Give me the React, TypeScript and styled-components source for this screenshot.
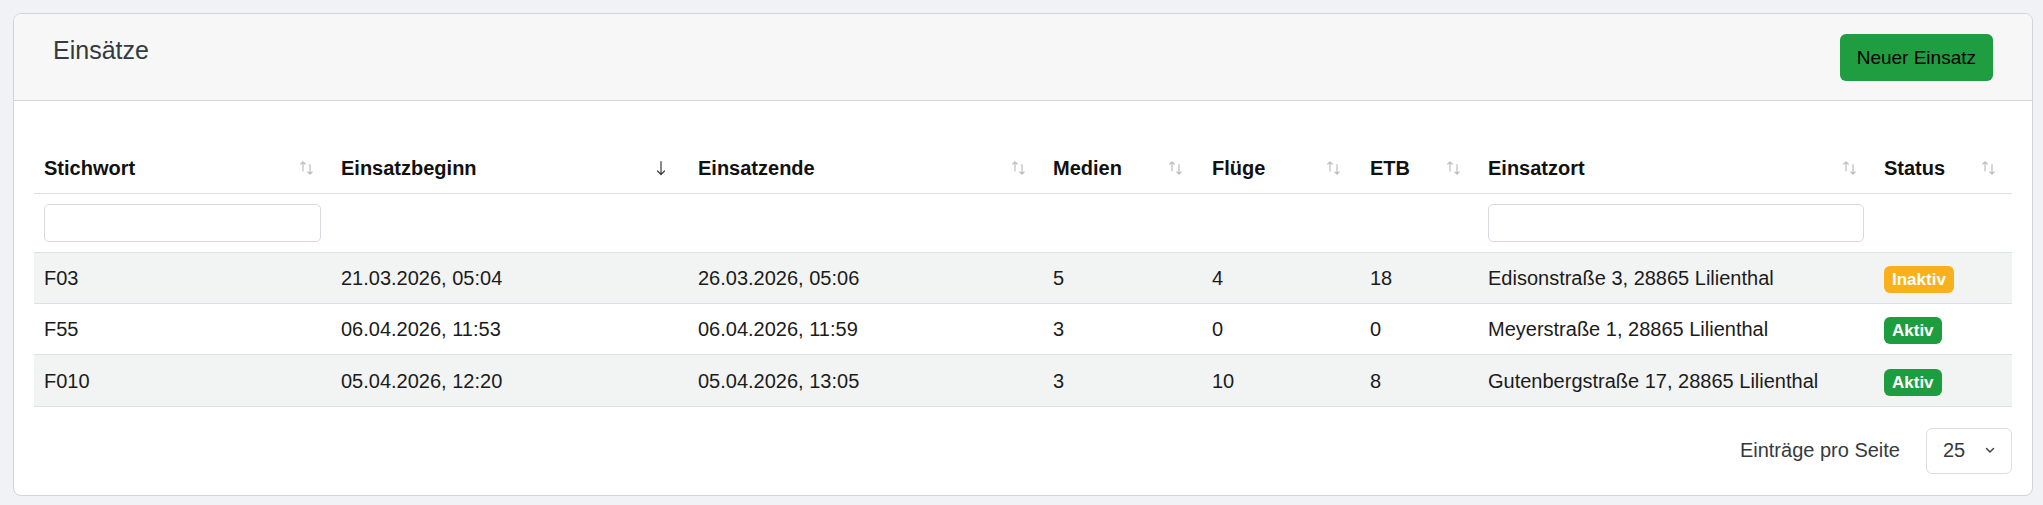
import React from "react";
import styled, { createGlobalStyle } from "styled-components";

const GlobalStyle = createGlobalStyle`
  html, body {
    margin: 0;
    padding: 0;
    background: #f1f2f5;
    font-family: "Liberation Sans", Arial, sans-serif;
    color: #212529;
  }
  * { box-sizing: border-box; }
`;

const Page = styled.div`
  padding: 13px 10px 13px 13px;
`;

const Card = styled.section`
  background: #ffffff;
  border: 1px solid #d3d4d8;
  border-radius: 8px;
  overflow: hidden;
`;

const CardHeader = styled.header`
  display: flex;
  justify-content: space-between;
  align-items: flex-start;
  padding: 20px 39px 19px 39px;
  background: #f7f7f7;
  border-bottom: 1px solid #d3d4d8;
`;

const Title = styled.h2`
  margin: 2px 0 0;
  font-size: 25px;
  line-height: 29px;
  font-weight: 400;
  color: #343a40;
`;

const PrimaryButton = styled.button`
  height: 47px;
  padding: 0 17px;
  border: none;
  border-radius: 6px;
  background: #1f9d40;
  color: #000;
  font-family: inherit;
  font-size: 19px;
  cursor: pointer;
`;

const CardBody = styled.div`
  padding: 42px 20px 21px;
`;

const Table = styled.table`
  width: 100%;
  table-layout: fixed;
  border-collapse: collapse;
  font-size: 20px;
`;

const HeadCell = styled.th<{ $trail?: number }>`
  padding: 10px ${(p) => p.$trail ?? 16}px 10px 10px;
  text-align: left;
  font-weight: 700;
  color: #111;
  line-height: 30px;
  border-bottom: 1px solid #dfe0e6;
`;

const HeadInner = styled.div`
  display: flex;
  align-items: center;
  justify-content: space-between;
`;

const FilterCell = styled.td`
  padding: 10px;
  height: 58px;
  border-bottom: 1px solid #dfe0e6;
`;

const FilterInput = styled.input`
  display: block;
  width: 100%;
  height: 38px;
  border: 1px solid #d8d9de;
  border-radius: 5px;
  background: #fff;
  font-family: inherit;
  font-size: 18px;
  padding: 0 10px;
`;

const Row = styled.tr<{ $striped: boolean }>`
  background: ${(p) => (p.$striped ? "#f2f3f3" : "#ffffff")};
`;

const Cell = styled.td`
  padding: 10px;
  line-height: 30px;
  color: #1b1b1b;
  border-bottom: 1px solid #dfe0e6;
  white-space: nowrap;
`;

const Badge = styled.span<{ $tone: "active" | "inactive" }>`
  display: inline-block;
  padding: 0 8px;
  height: 27px;
  line-height: 27px;
  border-radius: 6px;
  font-size: 17px;
  font-weight: 700;
  color: #fff;
  vertical-align: middle;
  background: ${(p) => (p.$tone === "active" ? "#1e9c40" : "#f7b21b")};
`;

const Footer = styled.div`
  display: flex;
  justify-content: flex-end;
  align-items: center;
  gap: 26px;
  margin-top: 21px;
`;

const FooterLabel = styled.span`
  font-size: 20px;
  color: #343a40;
`;

const PageSize = styled.div`
  display: flex;
  align-items: center;
  justify-content: space-between;
  width: 86px;
  height: 46px;
  padding: 0 16px;
  border: 1px solid #dcdde2;
  border-radius: 6px;
  font-size: 20px;
  color: #343a40;
`;

const SortIcon = () => (
  <svg width="16" height="16" viewBox="0 0 16 16" fill="none">
    <g stroke="#bcbcc0" strokeWidth="1.2" strokeLinecap="round" strokeLinejoin="round">
      <path d="M4 11V1.8M1.8 4L4 1.8L6.2 4" />
      <path d="M11 4.5V14M8.8 11.8L11 14L13.2 11.8" />
    </g>
  </svg>
);

const SortDownIcon = () => (
  <svg width="16" height="16" viewBox="0 0 16 16" fill="none">
    <g stroke="#3a3a3a" strokeWidth="1.2" strokeLinecap="round" strokeLinejoin="round">
      <path d="M7 1.5V14.5M3.5 11L7 14.5L10.5 11" />
    </g>
  </svg>
);

const Chevron = () => (
  <svg width="10" height="7" viewBox="0 0 10 7" fill="none">
    <path d="M1.5 1.5L5 5L8.5 1.5" stroke="#444" strokeWidth="1.5" strokeLinecap="round" strokeLinejoin="round" />
  </svg>
);

type Column = { key: string; label: string; width: number; filter?: boolean; sorted?: boolean; trail?: number };

const columns: Column[] = [
  { key: "stichwort", label: "Stichwort", width: 297, filter: true },
  { key: "beginn", label: "Einsatzbeginn", width: 357, sorted: true, trail: 18 },
  { key: "ende", label: "Einsatzende", width: 355 },
  { key: "medien", label: "Medien", width: 159, trail: 18 },
  { key: "fluege", label: "Flüge", width: 158, trail: 18 },
  { key: "etb", label: "ETB", width: 118 },
  { key: "ort", label: "Einsatzort", width: 396, filter: true },
  { key: "status", label: "Status", width: 138, trail: 15 },
];

type Einsatz = {
  stichwort: string;
  beginn: string;
  ende: string;
  medien: number;
  fluege: number;
  etb: number;
  ort: string;
  aktiv: boolean;
};

const einsaetze: Einsatz[] = [
  { stichwort: "F03", beginn: "21.03.2026, 05:04", ende: "26.03.2026, 05:06", medien: 5, fluege: 4, etb: 18, ort: "Edisonstraße 3, 28865 Lilienthal", aktiv: false },
  { stichwort: "F55", beginn: "06.04.2026, 11:53", ende: "06.04.2026, 11:59", medien: 3, fluege: 0, etb: 0, ort: "Meyerstraße 1, 28865 Lilienthal", aktiv: true },
  { stichwort: "F010", beginn: "05.04.2026, 12:20", ende: "05.04.2026, 13:05", medien: 3, fluege: 10, etb: 8, ort: "Gutenbergstraße 17, 28865 Lilienthal", aktiv: true },
];

export default function App() {
  return (
    <>
      <GlobalStyle />
      <Page>
        <Card>
          <CardHeader>
            <Title>Einsätze</Title>
            <PrimaryButton>Neuer Einsatz</PrimaryButton>
          </CardHeader>
          <CardBody>
            <Table>
              <colgroup>
                {columns.map((c) => (
                  <col key={c.key} style={{ width: c.width }} />
                ))}
              </colgroup>
              <thead>
                <tr>
                  {columns.map((c) => (
                    <HeadCell key={c.key} $trail={c.trail}>
                      <HeadInner>
                        <span>{c.label}</span>
                        {c.sorted ? <SortDownIcon /> : <SortIcon />}
                      </HeadInner>
                    </HeadCell>
                  ))}
                </tr>
                <tr>
                  {columns.map((c) => (
                    <FilterCell key={c.key}>{c.filter ? <FilterInput type="text" /> : null}</FilterCell>
                  ))}
                </tr>
              </thead>
              <tbody>
                {einsaetze.map((e, i) => (
                  <Row key={e.stichwort} $striped={i % 2 === 0}>
                    <Cell>{e.stichwort}</Cell>
                    <Cell>{e.beginn}</Cell>
                    <Cell>{e.ende}</Cell>
                    <Cell>{e.medien}</Cell>
                    <Cell>{e.fluege}</Cell>
                    <Cell>{e.etb}</Cell>
                    <Cell>{e.ort}</Cell>
                    <Cell>
                      <Badge $tone={e.aktiv ? "active" : "inactive"}>{e.aktiv ? "Aktiv" : "Inaktiv"}</Badge>
                    </Cell>
                  </Row>
                ))}
              </tbody>
            </Table>
            <Footer>
              <FooterLabel>Einträge pro Seite</FooterLabel>
              <PageSize>
                <span>25</span>
                <Chevron />
              </PageSize>
            </Footer>
          </CardBody>
        </Card>
      </Page>
    </>
  );
}
